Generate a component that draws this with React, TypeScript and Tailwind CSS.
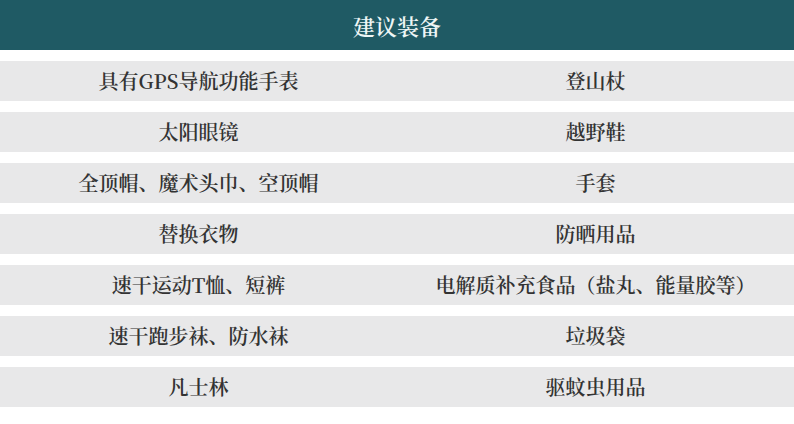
const rows: [string, string][] = [
  ["具有GPS导航功能手表", "登山杖"],
  ["太阳眼镜", "越野鞋"],
  ["全顶帽、魔术头巾、空顶帽", "手套"],
  ["替换衣物", "防晒用品"],
  ["速干运动T恤、短裤", "电解质补充食品（盐丸、能量胶等）"],
  ["速干跑步袜、防水袜", "垃圾袋"],
  ["凡士林", "驱蚊虫用品"],
];

export default function App() {
  return (
    <div
      className="w-[794px] h-[424px] bg-white"
      style={{ fontFamily: '"Noto Serif CJK SC", "Liberation Serif", "Noto Sans CJK SC", serif' }}
    >
      <div className="h-[50px] bg-[#1f5a64] flex items-center justify-center text-[22px] text-[#eef6f6] font-semibold">
        建议装备
      </div>
      <div className="mt-[11px] flex flex-col gap-[11px]">
        {rows.map(([a, b], i) => (
          <div key={i} className="h-[40px] bg-[#e8e8e9] grid grid-cols-2 items-center text-[20px] text-[#333333] font-semibold">
            <div className="text-center">{a}</div>
            <div className="text-center">{b}</div>
          </div>
        ))}
      </div>
    </div>
  );
}
